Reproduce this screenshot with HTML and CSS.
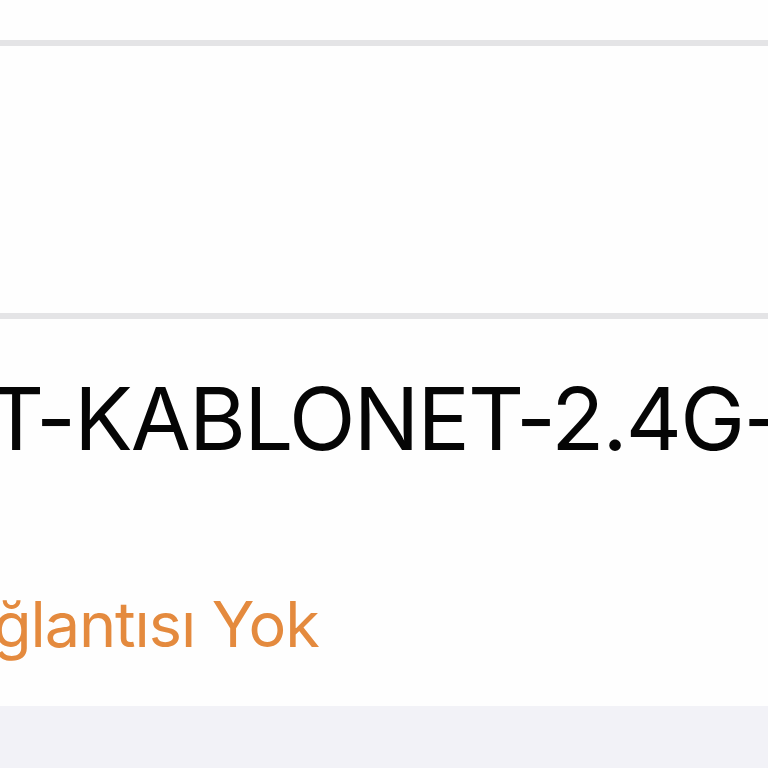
FILE: index.html
```html
<!DOCTYPE html>
<html lang="tr">
<head>
<meta charset="utf-8">
<link rel="stylesheet" href="styles.css">
</head>
<body>
<div class="screen">
  <div class="top-gap"></div>
  <div class="sep"></div>
  <div class="cell-empty"></div>
  <div class="sep"></div>
  <div class="network">
    <div class="ssid">T-KABLONET-2.4G-</div>
    <div class="status">ğlantısı Yok</div>
  </div>
  <div class="footer"></div>
</div>
</body>
</html>
```
FILE: styles.css
```css
html, body {
  margin: 0;
  padding: 0;
  background: #fefefe;
}
.screen {
  width: 768px;
  height: 768px;
  overflow: hidden;
  display: flex;
  flex-direction: column;
  font-family: Inter, "Liberation Sans", Arial, sans-serif;
}
.top-gap {
  height: 40px;
  flex: none;
}
.sep {
  height: 6px;
  flex: none;
  background: #e4e4e6;
}
.cell-empty {
  height: 267px;
  flex: none;
}
.network {
  height: 387px;
  flex: none;
  box-sizing: border-box;
  padding-top: 56px;
  background: #fefefe;
  overflow: hidden;
}
.ssid {
  font-size: 87px;
  line-height: 87px;
  height: 87px;
  color: #050505;
  white-space: nowrap;
  letter-spacing: -1.8px;
  margin-left: -12px;
}
.status {
  font-size: 63px;
  line-height: 63px;
  height: 63px;
  margin-top: 131px;
  color: #e48a3e;
  white-space: nowrap;
  letter-spacing: -1.1px;
  margin-left: -7px;
}
.footer {
  flex: 1;
  background: #f2f2f7;
}
```
